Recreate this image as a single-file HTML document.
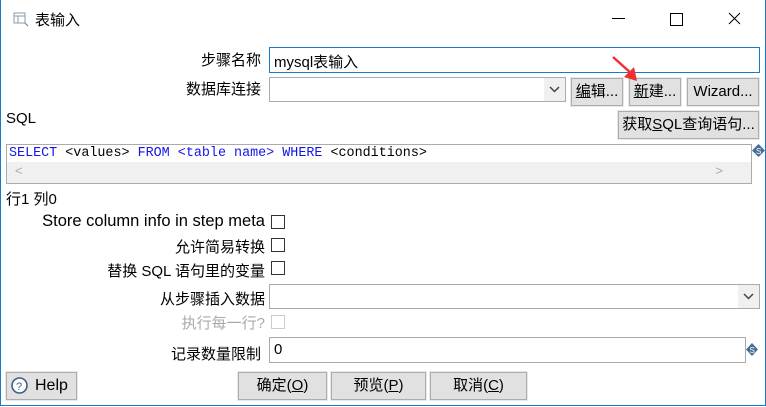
<!DOCTYPE html><html><head><meta charset="utf-8"><style>
body{margin:0;width:766px;height:407px;overflow:hidden;background:#fff;font-family:"Liberation Sans","Noto Sans CJK SC",sans-serif;font-size:15px;color:#000;position:relative}
.a{position:absolute}
.win{left:0;top:0;width:764px;height:405px;border:1px solid #1979ca;border-top:none}
.lbl{position:absolute;text-align:right;white-space:nowrap}
.inp{position:absolute;border:1px solid #ababab;background:#fff;box-sizing:border-box}
.btn{position:absolute;background:#e1e1e1;border:1px solid #adadad;box-sizing:border-box;text-align:center;white-space:nowrap;outline:1px solid #e8e8e8}
.cb{position:absolute;width:14px;height:14px;border:1px solid #333;box-sizing:border-box;background:#fff}
</style></head><body>
<div class="a win"></div>
<svg class="a" style="left:13px;top:11px" width="16" height="16"><rect x="1" y="2" width="11" height="10" fill="none" stroke="#8a9aa8"/><line x1="1" y1="5" x2="12" y2="5" stroke="#8a9aa8"/><line x1="5" y1="5" x2="5" y2="12" stroke="#8a9aa8"/><path d="M12 12l3 3" stroke="#5a7fa0"/></svg>
<div class="a" style="left:35px;top:9px;font-size:15px">表输入</div>
<div class="a" style="left:612px;top:18px;width:13px;height:1px;background:#000"></div>
<div class="a" style="left:670px;top:13px;width:11px;height:11px;border:1px solid #000"></div>
<svg class="a" style="left:728px;top:12px" width="13" height="13"><path d="M1 1L12 12M12 1L1 12" stroke="#000"/></svg>

<div class="lbl" style="right:505px;top:49px">步骤名称</div>
<div class="inp" style="left:269px;top:47px;width:491px;height:26px;border-color:#1979ca"><span class="a" style="left:4px;top:3px;font-size:15px">mysql表输入</span></div>
<div class="lbl" style="right:505px;top:78px">数据库连接</div>
<div class="inp" style="left:269px;top:77px;width:297px;height:25px"><div class="a" style="right:0;top:0;width:21px;height:23px;background:#f0f0f0"></div><svg class="a" style="right:5px;top:8px" width="11" height="7"><path d="M1 1l4.5 4.5L10 1" fill="none" stroke="#444" stroke-width="1.5"/></svg></div>
<div class="btn" style="left:571px;top:78px;width:52px;height:28px;line-height:26px"><u>编</u>辑...</div>
<div class="btn" style="left:629px;top:78px;width:52px;height:28px;line-height:26px"><u>新</u>建...</div>
<div class="btn" style="left:687px;top:78px;width:72px;height:28px;line-height:26px">Wizard...</div>
<svg class="a" style="left:610px;top:54px" width="30" height="30"><path d="M3 3L22 20" stroke="#f03030" stroke-width="2.5"/><path d="M27 27L14 23L24 13Z" fill="#f03030"/></svg>
<div class="a" style="left:6px;top:110px;font-size:15px">SQL</div>
<div class="btn" style="left:618px;top:111px;width:141px;height:28px;line-height:26px">获取<u>S</u>QL查询语句...</div>
<div class="inp" style="left:6px;top:144px;width:746px;height:40px">
<div class="a" style="left:2px;top:1px;font-family:'Liberation Mono','Noto Sans CJK SC',monospace;font-size:13.4px;white-space:nowrap"><span style="color:#1515e8">SELECT</span> &lt;values&gt; <span style="color:#1515e8">FROM</span> <span style="color:#1515e8">&lt;table name&gt;</span> <span style="color:#1515e8">WHERE</span> &lt;conditions&gt;</div>
<div class="a" style="left:0;top:17px;width:744px;height:21px;background:#f0f0f0"></div>
<div class="a" style="left:8px;top:18px;color:#aaa;font-size:13px">&lt;</div><div class="a" style="right:28px;top:18px;color:#aaa;font-size:13px">&gt;</div>
</div>
<svg class="a" style="left:752px;top:144px" width="13" height="13"><path d="M6.5 0L13 6.5L6.5 13L0 6.5Z" fill="#4a6e96"/><text x="4" y="10" font-size="8" fill="#fff" font-family="Liberation Sans">S</text></svg>
<div class="a" style="left:6px;top:188px">行1 列0</div>
<div class="lbl" style="right:501px;top:212px;font-size:16.5px">Store column info in step meta</div><div class="cb" style="left:271px;top:215px"></div>
<div class="lbl" style="right:501px;top:236px">允许简易转换</div><div class="cb" style="left:271px;top:238px"></div>
<div class="lbl" style="right:501px;top:260px">替换 SQL 语句里的变量</div><div class="cb" style="left:271px;top:261px"></div>
<div class="lbl" style="right:501px;top:288px">从步骤插入数据</div>
<div class="inp" style="left:269px;top:284px;width:491px;height:25px"><div class="a" style="right:0;top:0;width:21px;height:23px;background:#f0f0f0"></div><svg class="a" style="right:5px;top:8px" width="11" height="7"><path d="M1 1l4.5 4.5L10 1" fill="none" stroke="#444" stroke-width="1.5"/></svg></div>
<div class="lbl" style="right:501px;top:312px;color:#aaa">执行每一行?</div><div class="cb" style="left:271px;top:315px;border-color:#ccc"></div>
<div class="lbl" style="right:505px;top:343px">记录数量限制</div>
<div class="inp" style="left:269px;top:337px;width:477px;height:26px"><span class="a" style="left:4px;top:3px;font-size:15px">0</span></div>
<svg class="a" style="left:746px;top:343px" width="12" height="13"><path d="M6 0L12 6.5L6 13L0 6.5Z" fill="#4a6e96"/><text x="3.5" y="10" font-size="8" fill="#fff" font-family="Liberation Sans">S</text></svg>
<div class="btn" style="left:6px;top:372px;width:71px;height:28px;line-height:26px;text-align:left;padding-left:28px;font-size:16px">Help</div>
<svg class="a" style="left:11px;top:377px" width="17" height="17"><circle cx="8.5" cy="8.5" r="7.5" fill="#fff" stroke="#3d5f80" stroke-width="1.6"/><text x="5" y="13" font-size="11" fill="#3d5f80" font-family="Liberation Sans">?</text></svg>
<div class="btn" style="left:238px;top:372px;width:89px;height:28px;line-height:26px">确定(<u>O</u>)</div>
<div class="btn" style="left:331px;top:372px;width:95px;height:28px;line-height:26px">预览(<u>P</u>)</div>
<div class="btn" style="left:430px;top:372px;width:97px;height:28px;line-height:26px">取消(<u>C</u>)</div>
</body></html>
